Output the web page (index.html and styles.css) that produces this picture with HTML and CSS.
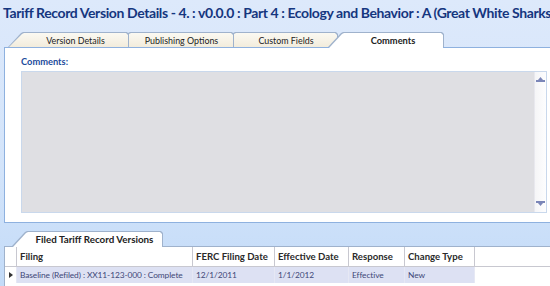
FILE: index.html
```html
<!DOCTYPE html>
<html>
<head>
<meta charset="utf-8">
<link rel="stylesheet" href="styles.css">
</head>
<body>
<div class="app">
  <div class="title">Tariff Record Version Details - 4. : v0.0.0 : Part 4 : Ecology and Behavior : A (Great White Sharks</div>
  <div class="tabs">
    <div class="tab t1"><span>Version Details</span></div>
    <div class="tab t2"><span>Publishing Options</span></div>
    <div class="tab t3"><span>Custom Fields</span></div>
    <div class="tab t4 active"><span>Comments</span></div>
  </div>
  <div class="panel">
    <div class="label">Comments:</div>
    <div class="memo">
      <div class="memo-area"></div>
      <div class="scroll">
        <svg width="9" height="6" viewBox="0 0 9 6"><rect x="0" y="4" width="9" height="2" fill="#7b86b8"/><path d="M2 4 L4.5 1 L7 4 Z" fill="#7b86b8"/></svg>
        <svg width="9" height="6" viewBox="0 0 9 6"><rect x="0" y="0" width="9" height="2" fill="#7b86b8"/><path d="M2 2 L4.5 5 L7 2 Z" fill="#7b86b8"/></svg>
      </div>
    </div>
  </div>
  <div class="tabs bottom-tabs">
    <div class="tab tb active"><span>Filed Tariff Record Versions</span></div>
  </div>
  <div class="grid">
    <div class="row head">
      <div class="cell ind"></div>
      <div class="cell c1">Filing</div>
      <div class="cell c2">FERC Filing Date</div>
      <div class="cell c3">Effective Date</div>
      <div class="cell c4">Response</div>
      <div class="cell c5">Change Type</div>
    </div>
    <div class="row data">
      <div class="cell ind"><svg width="4" height="6" viewBox="0 0 4 6"><path d="M0 0 L4 3 L0 6 Z" fill="#333"/></svg></div>
      <div class="cell c1">Baseline (Refiled) : XX11-123-000 : Complete</div>
      <div class="cell c2">12/1/2011</div>
      <div class="cell c3">1/1/2012</div>
      <div class="cell c4">Effective</div>
      <div class="cell c5">New</div>
    </div>
  </div>
</div>
</body>
</html>
```

FILE: styles.css
```css
html, body { margin: 0; padding: 0; }
body {
  width: 550px;
  height: 286px;
  overflow: hidden;
  background: #d9e7fb;
  font-family: Lato, "DejaVu Sans", sans-serif;
}
.app {
  display: flex;
  flex-direction: column;
  height: 286px;
  background: linear-gradient(#dde9fb, #d3e4fa 60%, #c3dbf8);
}
.title {
  height: 32px;
  box-sizing: border-box;
  padding: 4px 0 0 3px;
  font-size: 14px;
  letter-spacing: -0.4px;
  font-weight: bold;
  color: #15367f;
  white-space: nowrap;
}
.tabs {
  display: flex;
  height: 15px;
  padding-left: 8px;
}
.tab {
  position: relative;
  height: 15px;
  box-sizing: border-box;
  padding-left: 14px;
  font-size: 8.9px;
  color: #222;
  display: flex;
  align-items: center;
  justify-content: center;
  margin-left: -14px;
}
.tab:first-child { margin-left: 0; }
.tab::before, .tab::after {
  content: "";
  position: absolute;
  left: 0; top: 0; right: 0; bottom: 0;
  clip-path: polygon(0 100%, 13px 1px, 15px 0, calc(100% - 2px) 0, 100% 2px, 100% 100%);
}
.tab::before { background: #9fb2cc; }
.tab::after {
  left: 1px; top: 1px; right: 1px; bottom: 0;
  background: linear-gradient(#fbf9f2, #f2ecdc);
}
.tab span { position: relative; z-index: 2; line-height: 15px; padding-top: 1px; }
.t1 { width: 121px; z-index: 4; }
.t2 { width: 119px; z-index: 3; }
.t3 { width: 118px; z-index: 2; }
.t4 { width: 116px; margin-left: -10px; font-size: 9.3px; }
.tab.active { z-index: 6; font-weight: bold; }
.tab.active::after { background: #fff; bottom: -1px; }
.panel {
  height: 176px;
  margin-left: 4px;
  background: #fff;
  border: 1px solid #8eb1df;
  border-right: none;
  box-sizing: border-box;
  padding: 8px 3px 9px 16px;
  display: flex;
  flex-direction: column;
  position: relative;
  z-index: 1;
}
.label {
  font-size: 9.3px;
  font-weight: bold;
  color: #1c4c9c;
  height: 15px;
  line-height: 11px;
}
.memo {
  flex: 1;
  display: flex;
  border: 1px solid #c9d8ec;
}
.memo-area { flex: 1; background: #dfdfe3; }
.scroll {
  width: 11px;
  background: linear-gradient(90deg, #f5f5f7, #fdfdfe);
  border-left: 1px solid #e8e8ee;
  display: flex;
  flex-direction: column;
  justify-content: space-between;
  align-items: center;
  padding: 4px 0 5px;
}
.scroll svg { display: block; }
.bottom-tabs { margin-top: 8px; padding-left: 12px; }
.tb { width: 151px; font-size: 9.8px; }
.grid {
  flex: 1;
  margin-left: 4px;
  background: #fff;
  border-left: 1px solid #9fb2cc;
  border-top: 1px solid #9fb2cc;
  position: relative;
  z-index: 1;
}
.row { display: flex; }
.head { height: 19px; border-bottom: 1px solid #c8c8d0; }
.head .cell {
  font-size: 9.6px;
  font-weight: bold;
  color: #2a2a2a;
  border-right: 1px solid #c8c8d0;
}
.data { height: 16px; }
.data .cell {
  background: #dde1f3;
  font-size: 8.4px;
  letter-spacing: -0.1px;
  color: #3d4878;
  border-right: 1px solid #e6e8f4;
}
.cell {
  box-sizing: border-box;
  display: flex;
  align-items: center;
  padding-left: 3px;
  white-space: nowrap;
  overflow: hidden;
}
.ind { width: 12px; padding-left: 4px; }
.data .ind { background: #fff; }
.c1 { width: 176px; }
.c2 { width: 82px; }
.c3 { width: 74px; }
.c4 { width: 56px; }
.c5 { width: 70px; }
```
